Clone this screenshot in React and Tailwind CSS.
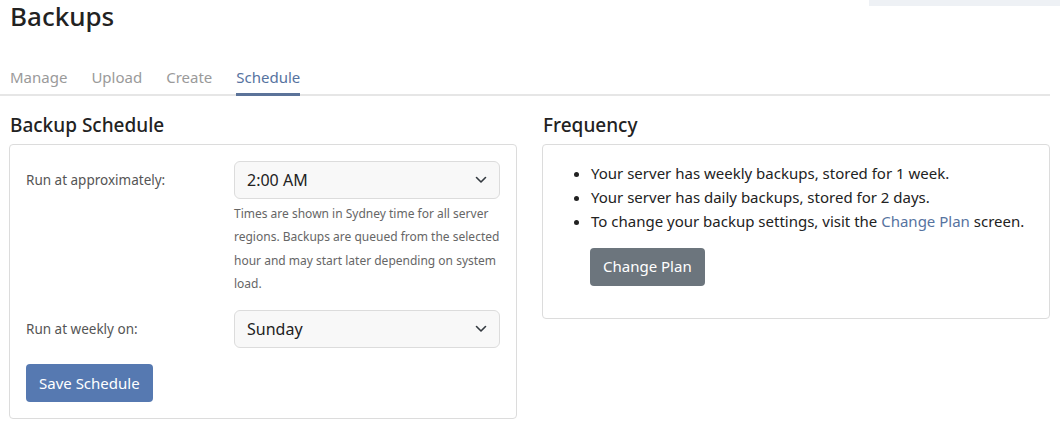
import React from "react";

function Chevron() {
  return (
    <svg width="12" height="8" viewBox="0 0 12 8" fill="none" className="shrink-0">
      <path d="M1.5 1.5 L6 6 L10.5 1.5" stroke="#343a40" strokeWidth="1.6" strokeLinecap="round" strokeLinejoin="round" />
    </svg>
  );
}

function Select({ value }) {
  return (
    <div className="flex h-[38px] items-center justify-between rounded-[6px] border border-[#dcdcdc] bg-[#f8f8f8] pl-[12px] pr-[12px] text-[16px] text-[#222]">
      <span>{value}</span>
      <Chevron />
    </div>
  );
}

export default function App() {
  return (
    <div className="relative h-[430px] w-[1060px] overflow-hidden bg-white text-[#212529]" style={{ fontFamily: '"Noto Sans", "Open Sans", sans-serif' }}>
      <div className="absolute right-0 top-0 h-[6px] w-[191px] bg-[#eef1f5]" />
      <h1 className="ml-[10px] pt-[1px] text-[26px] font-medium leading-[30px] text-[#222]">Backups</h1>
      <div className="mt-[35px] mr-[10px] flex border-b-2 border-[#e6e6e6] pl-[10px] text-[15px] text-[#9a9a9a]">
        <div className="pb-[5px] pr-[24px]">Manage</div>
        <div className="pb-[5px] pr-[24px]">Upload</div>
        <div className="pb-[5px] pr-[24px]">Create</div>
        <div className="-mb-[2px] border-b-[3px] border-[#5b7399] pb-[3px] text-[#5673a0]">Schedule</div>
      </div>
      <div className="mt-[17px] grid grid-cols-2 gap-[25px] pl-[9px] pr-[10px]">
        <div>
          <h2 className="pl-[1px] text-[19px] font-medium leading-[24px] text-[#222]">Backup Schedule</h2>
          <div className="mt-[7px] rounded-[4px] border border-[#dcdcdc] px-[16px] pb-[16px] pt-[16px]">
            <div className="flex">
              <div className="w-[208px] pt-[9px] text-[13.5px] text-[#555]">Run at approximately:</div>
              <div className="flex-1">
                <Select value="2:00 AM" />
                <p className="mt-[3px] text-[12px] leading-[23.6px] text-[#666]">
                  Times are shown in Sydney time for all server regions. Backups are queued from the selected hour and may start later depending on system load.
                </p>
              </div>
            </div>
            <div className="mt-[14px] flex">
              <div className="w-[208px] pt-[9px] text-[13.5px] text-[#555]">Run at weekly on:</div>
              <div className="flex-1">
                <Select value="Sunday" />
              </div>
            </div>
            <button className="mt-[16px] h-[38px] rounded-[4px] bg-[#5679b1] px-[13px] text-[15px] text-white">Save Schedule</button>
          </div>
        </div>
        <div>
          <h2 className="pl-[1px] text-[19px] font-medium leading-[24px] text-[#222]">Frequency</h2>
          <div className="mt-[7px] rounded-[4px] border border-[#dcdcdc] pb-[32px] pl-[32px] pr-[16px] pt-[16px]">
            <ul className="list-disc pl-[16px] text-[15px] leading-[24px] text-[#222]">
              <li>Your server has weekly backups, stored for 1 week.</li>
              <li>Your server has daily backups, stored for 2 days.</li>
              <li>
                To change your backup settings, visit the <span className="text-[#5673a0]">Change Plan</span> screen.
              </li>
            </ul>
            <button className="ml-[15px] mt-[15px] h-[38px] rounded-[4px] bg-[#6c757d] px-[13px] text-[15px] text-white">Change Plan</button>
          </div>
        </div>
      </div>
    </div>
  );
}
